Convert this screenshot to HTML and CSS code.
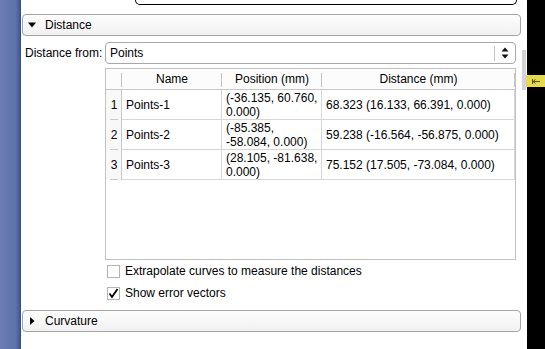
FILE: index.html
```html
<!DOCTYPE html>
<html lang="en">
<head>
  <meta charset="UTF-8">
  <title>Distance</title>
  <link rel="stylesheet" href="styles.css">
</head>
<body>
  <div class="window">
    <div class="dock"></div>

    <div class="panel">
      <div class="top-field"></div>

      <div class="group-head">
        <svg class="tri" width="8" height="6" viewBox="0 0 8 6"><path d="M0 0.5H8L4 5.5Z" fill="#000"/></svg>
        Distance
      </div>

      <div class="group-body">
        <div class="from-row">
          <label class="from-label">Distance from:</label>
          <div class="combo">
            <span>Points</span>
            <span class="combo-btn">
              <svg width="8" height="12" viewBox="0 0 8 12"><path d="M0.5 4.5L4 0.5L7.5 4.5Z M0.5 7.5L4 11.5L7.5 7.5Z" fill="#111"/></svg>
            </span>
          </div>
        </div>

        <div class="grid">
          <div class="hd"></div>
          <div class="hd">Name</div>
          <div class="hd">Position (mm)</div>
          <div class="hd">Distance (mm)</div>

          <div class="num">1</div>
          <div class="cell">Points-1</div>
          <div class="cell">(-36.135, 60.760,<br>0.000)</div>
          <div class="cell">68.323 (16.133, 66.391, 0.000)</div>

          <div class="num">2</div>
          <div class="cell">Points-2</div>
          <div class="cell">(-85.385,<br>-58.084, 0.000)</div>
          <div class="cell">59.238 (-16.564, -56.875, 0.000)</div>

          <div class="num">3</div>
          <div class="cell">Points-3</div>
          <div class="cell">(28.105, -81.638,<br>0.000)</div>
          <div class="cell">75.152 (17.505, -73.084, 0.000)</div>
        </div>

        <div class="check-row">
          <span class="box"></span>
          Extrapolate curves to measure the distances
        </div>
        <div class="check-row">
          <span class="box">
            <svg width="11" height="11" viewBox="0 0 11 11"><path d="M1.5 5.5L4 9L9.5 1" fill="none" stroke="#000" stroke-width="1.8"/></svg>
          </span>
          Show error vectors
        </div>
      </div>

      <div class="group-head closed">
        <svg class="tri" width="8" height="8" viewBox="0 0 8 8"><path d="M2 0L6.5 4L2 8Z" fill="#000"/></svg>
        Curvature
      </div>

      <div class="scroll-thumb"></div>
    </div>

    <div class="edge">
      <div class="tab">
        <svg width="8" height="5" viewBox="0 0 8 5"><path d="M0.5 0V5 M1 2.5H8 M1 2.5L3.5 0.5 M1 2.5L3.5 4.5" fill="none" stroke="#5a5410" stroke-width="1"/></svg>
      </div>
    </div>
  </div>
</body>
</html>
```

FILE: styles.css
```css
body {
  margin: 0;
  font-family: "Liberation Sans", Arial, sans-serif;
  font-size: 12px;
  color: #000;
  background: #fff;
}
.window {
  display: flex;
  height: 349px;
  width: 545px;
  overflow: hidden;
}
.dock {
  width: 21px;
  flex: none;
  background: linear-gradient(to right, #6b7eb6 0%, #5d71aa 75%, #4a5c93 92%, #364679 100%);
}
.panel {
  position: relative;
  width: 506px;
  flex: none;
  background: #fff;
}
.edge {
  position: relative;
  flex: 1;
  background: #000;
}
.top-field {
  box-sizing: border-box;
  margin-left: 114px;
  width: 382px;
  height: 5px;
  border: 1px solid #000;
  border-top: none;
  border-radius: 0 0 6px 6px;
}
.group-head {
  box-sizing: border-box;
  display: flex;
  align-items: center;
  gap: 9px;
  margin: 9px 0 0 1px;
  width: 499px;
  height: 22px;
  padding-left: 5px;
  border: 1px solid #a4a4a4;
  border-radius: 4px;
  background: linear-gradient(#fdfdfd, #f1f1f1);
}
.group-head.closed {
  margin-top: 6px;
}
.group-body {
  padding-left: 4px;
}
.from-row {
  display: flex;
  align-items: center;
  margin-top: 6px;
}
.from-label {
  width: 80px;
}
.combo {
  box-sizing: border-box;
  display: flex;
  align-items: center;
  justify-content: space-between;
  width: 411px;
  height: 22px;
  padding-left: 4px;
  border: 1px solid #a8a8a8;
  border-radius: 4px;
  background: #fff;
}
.combo-btn {
  display: flex;
  align-items: center;
  justify-content: center;
  width: 20px;
  height: 15px;
  border-left: 1px solid #c4c4c4;
}
.grid {
  box-sizing: border-box;
  display: grid;
  grid-template-columns: 16px 100px 100px 193px;
  grid-template-rows: 21px 30px 30px 30px;
  align-content: start;
  margin: 4px 0 0 80px;
  width: 411px;
  height: 192px;
  border: 1px solid #c2c2c2;
}
.hd {
  box-sizing: border-box;
  display: flex;
  align-items: center;
  justify-content: center;
  border-bottom: 1px solid #c8c8c8;
  background: linear-gradient(#c6c6c6, #c6c6c6) no-repeat right 0 top 4px / 1px 14px, #fcfcfc;
}
.num {
  box-sizing: border-box;
  display: flex;
  align-items: center;
  justify-content: center;
  padding-left: 1px;
  border-right: 1px solid #c8c8c8;
  background: linear-gradient(#c8c8c8, #c8c8c8) no-repeat left 4px bottom 0 / 8px 1px, #f8f8f8;
}
.cell {
  box-sizing: border-box;
  display: flex;
  align-items: center;
  padding-left: 4px;
  line-height: 14px;
  border-right: 1px solid #d6d6d6;
  border-bottom: 1px solid #d6d6d6;
}
.check-row {
  display: flex;
  align-items: center;
  gap: 5px;
  height: 22px;
  margin-left: 82px;
}
.box {
  box-sizing: border-box;
  display: flex;
  align-items: center;
  justify-content: center;
  width: 13px;
  height: 13px;
  border: 1px solid #b4b4b4;
  background: #fff;
}
.scroll-thumb {
  position: absolute;
  left: 501px;
  top: 50px;
  width: 4px;
  height: 40px;
  background: #d4d4d4;
}
.tab {
  position: absolute;
  left: -1px;
  top: 75px;
  width: 19px;
  height: 12px;
  display: flex;
  align-items: center;
  justify-content: center;
  background: #e6d94a;
}
```
